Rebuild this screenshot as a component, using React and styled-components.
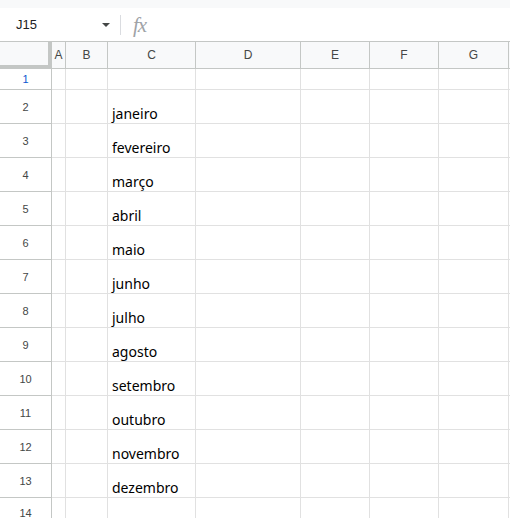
import styled, { createGlobalStyle } from "styled-components"

const GlobalStyle = createGlobalStyle`
  html, body {
    margin: 0;
    padding: 0;
    background: #ffffff;
    overflow: hidden;
  }
`

const Page = styled.div`
  width: 510px;
  height: 518px;
  overflow: hidden;
  font-family: Arial, "Liberation Sans", sans-serif;
`

const TopStrip = styled.div`
  height: 8px;
  background: #f8f9fa;
`

const FormulaBar = styled.div`
  display: flex;
  align-items: center;
  height: 33px;
  background: #ffffff;
`

const NameBox = styled.div`
  display: flex;
  align-items: center;
  justify-content: space-between;
  width: 94px;
  padding: 0 10px 0 16px;
  font-size: 13px;
  color: #202124;
`

const Arrow = styled.span`
  width: 0;
  height: 0;
  border-left: 4px solid transparent;
  border-right: 4px solid transparent;
  border-top: 4px solid #444746;
`

const Divider = styled.div`
  width: 1px;
  height: 20px;
  background: #dadce0;
  margin-right: 12px;
`

const Fx = styled.span`
  font-family: "Liberation Serif", "Times New Roman", serif;
  font-style: italic;
  font-size: 21px;
  line-height: 1;
  color: #a0a3a7;
  letter-spacing: -1px;
  padding-top: 2px;
`

const Grid = styled.div`
  display: grid;
  grid-template-columns: 52px 14px 42px 88px 105px 69px 69px 70px 1fr;
  grid-template-rows: 28px 21px repeat(12, 34px) 30px;
`

const ColHead = styled.div`
  display: flex;
  align-items: center;
  justify-content: center;
  background: #f8f9fa;
  border-top: 1px solid #c4c7c5;
  border-bottom: 1px solid #c4c7c5;
  border-right: 1px solid #c4c7c5;
  font-size: 12px;
  color: #444746;
`

const Corner = styled.div`
  background: #f8f9fa;
  border-top: 1px solid #c4c7c5;
  box-shadow: inset -4px -4px 0 #c4c7c5;
`

const RowHead = styled.div`
  display: flex;
  align-items: center;
  justify-content: center;
  border-right: 1px solid #c4c7c5;
  border-bottom: 1px solid #c4c7c5;
  font-size: 11px;
  color: ${p => (p.$active ? "#0b57d0" : "#444746")};
`

const Cell = styled.div`
  display: flex;
  align-items: flex-end;
  padding: 0 0 0 4px;
  border-right: 1px solid #e1e1e1;
  border-bottom: 1px solid #e1e1e1;
  font-family: "Noto Sans", "Open Sans", sans-serif;
  font-size: 14px;
  color: #000000;
  white-space: nowrap;
`

const columns = ["A", "B", "C", "D", "E", "F", "G", ""]
const months = [
  "", "janeiro", "fevereiro", "março", "abril", "maio", "junho",
  "julho", "agosto", "setembro", "outubro", "novembro", "dezembro", ""
]

const App = () => {
  return (
    <Page>
      <GlobalStyle />
      <TopStrip />
      <FormulaBar>
        <NameBox>
          J15
          <Arrow />
        </NameBox>
        <Divider />
        <Fx>fx</Fx>
      </FormulaBar>
      <Grid>
        <Corner />
        {columns.map((c, i) => <ColHead key={i}>{c}</ColHead>)}
        {months.map((m, r) => [
          <RowHead key={"h" + r} $active={r === 0}>{r + 1}</RowHead>,
          ...columns.map((c, i) => (
            <Cell key={r + "-" + i}>{c === "C" ? m : ""}</Cell>
          ))
        ])}
      </Grid>
    </Page>
  )
}

export default App
